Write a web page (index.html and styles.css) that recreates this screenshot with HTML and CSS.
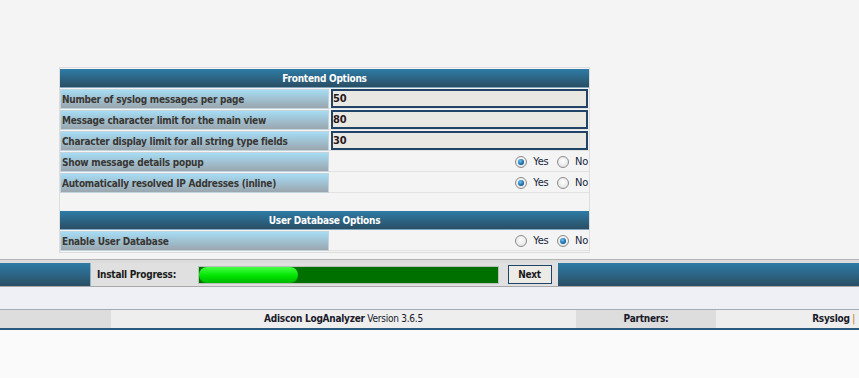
FILE: index.html
```html
<!DOCTYPE html>
<html lang="en">
<head>
  <meta charset="UTF-8" />
  <title>Adiscon LogAnalyzer - Installer</title>
  <link rel="stylesheet" href="styles.css">
</head>
<body>
  <div class="content">
    <table class="options">
      <tr><td class="header" colspan="2">Frontend Options</td></tr>
      <tr>
        <td class="label">Number of syslog messages per page</td>
        <td class="value"><input class="field" type="text" value="50"></td>
      </tr>
      <tr>
        <td class="label">Message character limit for the main view</td>
        <td class="value"><input class="field" type="text" value="80"></td>
      </tr>
      <tr>
        <td class="label">Character display limit for all string type fields</td>
        <td class="value"><input class="field" type="text" value="30"></td>
      </tr>
      <tr>
        <td class="label">Show message details popup</td>
        <td class="value choice">
          <span class="radio on"></span><span class="opt">Yes</span>
          <span class="radio"></span><span class="opt">No</span>
        </td>
      </tr>
      <tr>
        <td class="label">Automatically resolved IP Addresses (inline)</td>
        <td class="value choice">
          <span class="radio on"></span><span class="opt">Yes</span>
          <span class="radio"></span><span class="opt">No</span>
        </td>
      </tr>
      <tr><td class="spacer" colspan="2"></td></tr>
      <tr><td class="header" colspan="2">User Database Options</td></tr>
      <tr>
        <td class="label">Enable User Database</td>
        <td class="value choice">
          <span class="radio"></span><span class="opt">Yes</span>
          <span class="radio on"></span><span class="opt">No</span>
        </td>
      </tr>
    </table>
  </div>

  <div class="installbar">
    <div class="bluecell lead"></div>
    <div class="graycell caption">Install Progress:</div>
    <div class="graycell progresscell">
      <div class="progress"><div class="fill" style="width: 33%"></div></div>
    </div>
    <div class="graycell nextcell"><button class="next">Next</button></div>
    <div class="bluecell rest"></div>
  </div>

  <div class="gap"></div>

  <div class="footer">
    <div class="f-side"></div>
    <div class="f-main"><b>Adiscon LogAnalyzer</b> Version 3.6.5</div>
    <div class="f-partners">Partners:</div>
    <div class="f-links"><b>Rsyslog</b> <span class="pipe">|</span></div>
  </div>
  <div class="bottom"></div>
</body>
</html>
```

FILE: styles.css
```css
body {
  margin: 0;
  background-color: #fafafa;
  font-family: "DejaVu Sans Condensed", "DejaVu Sans", sans-serif;
  font-size: 10px;
  letter-spacing: -0.25px;
  color: #2a2a2a;
}
.content {
  background-color: #f4f4f4;
  padding: 67px 0 6px 59px;
  border-bottom: 1px solid #b4b4b4;
}
.options {
  width: 531px;
  border: 1px solid #dddddd;
  border-spacing: 0 1px;
  border-collapse: separate;
}
.options td {
  padding: 0;
}
.header {
  height: 18px;
  text-align: center;
  font-weight: bold;
  color: #ffffff;
  background: linear-gradient(#2e7ca6, #2a4e64);
  border-bottom: 1px solid #7fa8c0;
}
.label {
  width: 266px;
  height: 18px;
  padding-left: 1px !important;
  font-weight: bold;
  color: #3a3632;
  white-space: nowrap;
  background: linear-gradient(#a6dcf4, #9aa6ae);
  border: 1px solid #c4d4dc;
}
.value {
  background-color: #f4f4f4;
  border-bottom: 1px solid #e2e2e2;
}
.field {
  display: block;
  box-sizing: border-box;
  width: 257px;
  height: 19px;
  margin: 0 0 0 2px;
  padding: 0;
  border: 2px solid #1f4468;
  background-color: #e9e8e3;
  font-family: inherit;
  font-size: 11px;
  letter-spacing: -0.25px;
  font-weight: bold;
  color: #2a1a1a;
}
.choice {
  text-align: right;
  padding-right: 1px !important;
  white-space: nowrap;
}
.radio {
  display: inline-block;
  box-sizing: border-box;
  width: 12px;
  height: 12px;
  border-radius: 50%;
  border: 1px solid #8c8c8c;
  background: radial-gradient(circle at 50% 40%, #ffffff, #dcdcdc);
  vertical-align: -3px;
  position: relative;
}
.radio.on::after {
  content: "";
  position: absolute;
  left: 2px;
  top: 2px;
  width: 6px;
  height: 6px;
  border-radius: 50%;
  background: radial-gradient(circle at 40% 35%, #6fc4f0, #0a5a9c 70%, #06345e);
}
.opt {
  display: inline-block;
  margin: 0 6px 0 6px;
  font-size: 11px;
  color: #14243a;
}
.opt:last-child {
  margin-right: 0;
}
.spacer {
  height: 16px;
}

.installbar {
  display: flex;
  height: 23px;
  border-top: 3px solid #dcdcdc;
  border-bottom: 1px solid #a8a8a8;
}
.bluecell {
  background: linear-gradient(#2e7ca6, #2a4e64);
}
.lead {
  width: 90px;
  border-right: 1px solid #8fb4cc;
}
.rest {
  flex: 1;
}
.graycell {
  background-color: #e0e0e0;
  display: flex;
  align-items: center;
}
.caption {
  width: 101px;
  padding-left: 6px;
  font-weight: bold;
  color: #1a1a1a;
}
.progresscell {
  width: 303px;
}
.progress {
  width: 301px;
  height: 18px;
  background-color: #007000;
  border: 1px solid #b8c0b8;
  box-sizing: border-box;
}
.fill {
  height: 100%;
  border-radius: 8px;
  background: linear-gradient(#44ff44, #00e400 55%, #00b800);
}
.nextcell {
  width: 57px;
  justify-content: center;
}
.next {
  width: 44px;
  height: 19px;
  padding: 0;
  border: 1px solid #1f4468;
  background-color: #ecebe6;
  font-family: inherit;
  font-size: 10px;
  letter-spacing: -0.25px;
  font-weight: bold;
  color: #1a1a1a;
}

.gap {
  height: 22px;
  background-color: #eef0f5;
  border-bottom: 1px solid #a4acb4;
}
.footer {
  display: flex;
  height: 18px;
  line-height: 18px;
  border-bottom: 2px solid #2a5a80;
  color: #1a1a2a;
}
.f-side {
  width: 111px;
  background-color: #dddddd;
}
.f-main {
  width: 465px;
  text-align: center;
  background-color: #eeeeee;
}
.f-partners {
  width: 140px;
  text-align: center;
  font-weight: bold;
  background-color: #dddddd;
}
.f-links {
  flex: 1;
  text-align: right;
  padding-right: 4px;
  background-color: #eeeeee;
}
.pipe {
  color: #c07020;
}
.bottom {
  height: 50px;
}
```
